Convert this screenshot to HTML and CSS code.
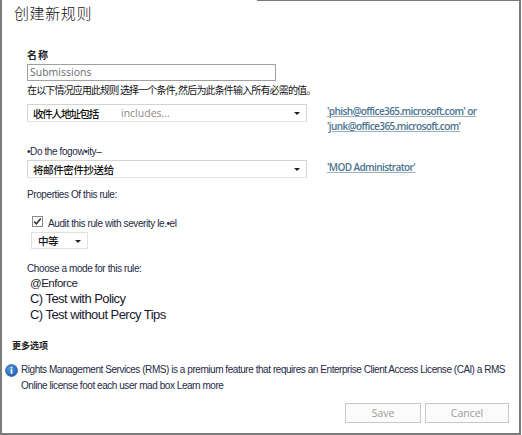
FILE: index.html
```html
<!DOCTYPE html>
<html lang="zh">
<head>
<meta charset="utf-8">
<title>创建新规则</title>
<link rel="stylesheet" href="styles.css">
</head>
<body>
<div class="frame">
  <h1 class="title">创建新规则</h1>
  <div class="form">
    <div class="label-cn">名称</div>
    <div class="textbox">Submissions</div>
    <div class="instr">在以下情况应用此规则 选择一个条件, 然后为此条件输入所有必需的值。</div>
    <div class="rule-row">
      <div class="select wide">
        <span class="sel-cn tight">收件人地址包括</span>
        <span class="sel-sub">includes...</span>
        <span class="arrow"></span>
      </div>
      <div class="links">
        <a class="link">'phish@office365.microsoft.com' or</a>
        <a class="link">'junk@office365.microsoft.com'</a>
      </div>
    </div>
    <div class="small-label do">•Do the fogow•ity–</div>
    <div class="rule-row">
      <div class="select wide">
        <span class="sel-cn">将邮件密件抄送给</span>
        <span class="arrow"></span>
      </div>
      <div class="links">
        <a class="link">'MOD Administrator'</a>
      </div>
    </div>
    <div class="small-label props">Properties Of this rule:</div>
    <div class="check-row">
      <span class="checkbox">
        <svg width="11" height="11" viewBox="0 0 11 11"><rect x="0.5" y="0.5" width="10" height="10" fill="#fff" stroke="#8a8a8a"/><path d="M2.2 5.6 L4.4 7.8 L8.8 2.6" fill="none" stroke="#333" stroke-width="1.5"/></svg>
      </span>
      <span class="check-text">Audit this rule with severity le.•el</span>
    </div>
    <div class="select small">
      <span class="sel-cn">中等</span>
      <span class="arrow"></span>
    </div>
    <div class="small-label mode">Choose a mode for this rule:</div>
    <div class="opt o1">@Enforce</div>
    <div class="opt o2">C) Test with Policy</div>
    <div class="opt o3">C) Test without Percy Tips</div>
  </div>
  <div class="more">更多选项</div>
  <div class="info">
    <span class="info-icon">
      <svg width="13" height="13" viewBox="0 0 13 13"><defs><radialGradient id="g" cx="40%" cy="35%" r="70%"><stop offset="0" stop-color="#5b9be0"/><stop offset="1" stop-color="#1d5fb0"/></radialGradient></defs><circle cx="6.5" cy="6.5" r="6" fill="url(#g)" stroke="#1a5299" stroke-width="0.6"/><rect x="5.7" y="5.2" width="1.7" height="4.6" fill="#fff"/><circle cx="6.55" cy="3.6" r="0.95" fill="#fff"/></svg>
    </span>
    <p class="info-text">Rights Management Services (RMS) is a premium feature that requires an Enterprise Client Access License (CAl) a RMS Online license foot each user mad box Learn more</p>
  </div>
  <div class="buttons">
    <button class="btn save">Save</button>
    <button class="btn cancel">Cancel</button>
  </div>
</div>
</body>
</html>
```
FILE: styles.css
```css
* { box-sizing: border-box; }
html, body { margin: 0; padding: 0; background: #fff; }
body {
  font-family: "Liberation Sans", "Noto Sans CJK SC", sans-serif;
  color: #222;
  width: 522px;
  height: 435px;
  overflow: hidden;
}
.frame {
  position: relative;
  width: 521px;
  height: 435px;
  border-left: 2px solid #7c7c7c;
  border-right: 2px solid #7c7c7c;
  border-bottom: 2px solid #7c7c7c;
}
.frame::before {
  content: "";
  position: absolute;
  top: 0;
  left: 255px;
  right: 0;
  height: 1px;
  background: #7c7c7c;
}
.title {
  margin: 0;
  padding: 3px 0 0 12px;
  font-family: "Noto Sans CJK SC", sans-serif;
  font-weight: 300;
  font-size: 15px;
  line-height: 20px;
  letter-spacing: 0.6px;
  color: #111;
}
.form { padding-left: 25px; }
.label-cn {
  margin-top: 25px;
  font-family: "Noto Sans CJK SC", sans-serif;
  font-weight: 700;
  font-size: 10px;
  line-height: 14px;
  letter-spacing: 1px;
}
.textbox {
  margin-top: 2px;
  width: 249px;
  height: 17px;
  border: 1px solid #a0a0a0;
  font-family: "Open Sans", sans-serif;
  font-size: 10.5px;
  line-height: 15px;
  padding-left: 2px;
  color: #6a6a6a;
}
.instr {
  margin-top: 2px;
  font-family: "Noto Sans CJK SC", sans-serif;
  font-size: 10px;
  line-height: 14px;
  letter-spacing: -0.85px;
  color: #111;
  white-space: nowrap;
}
.rule-row {
  display: flex;
  align-items: flex-start;
  gap: 20px;
  margin-top: 7px;
}
.select {
  position: relative;
  display: flex;
  align-items: center;
  height: 18px;
  border: 1px solid #d4d4d4;
  border-bottom-color: #e6e6e6;
  background: #fff;
}
.select.wide { width: 280px; }
.sel-cn {
  font-family: "Noto Sans CJK SC", sans-serif;
  font-weight: 500;
  font-size: 10.5px;
  letter-spacing: -0.4px;
  color: #111;
  padding-left: 5px;
  width: 93px;
}
.sel-cn.tight { letter-spacing: -1.2px; }
.sel-sub {
  font-family: "Open Sans", sans-serif;
  font-size: 10.5px;
  color: #8a8a8a;
}
.arrow {
  position: absolute;
  right: 6px;
  top: 7px;
  width: 0;
  height: 0;
  border-left: 3px solid transparent;
  border-right: 3px solid transparent;
  border-top: 3px solid #222;
}
.links { display: flex; flex-direction: column; }
.link {
  font-family: "Open Sans", sans-serif;
  font-weight: 600;
  font-size: 10px;
  line-height: 15px;
  letter-spacing: -0.6px;
  color: #4a7390;
  text-decoration: underline;
  text-decoration-color: #9ab0c0;
}
.small-label {
  font-family: "Liberation Sans", sans-serif;
  font-size: 10px;
  letter-spacing: -0.4px;
  line-height: 14px;
  color: #1e2a44;
}
.do { margin-top: 11px; }
.do + .rule-row { margin-top: 1px; }
.props { margin-top: 10px; }
.check-row {
  display: flex;
  align-items: flex-end;
  margin-top: 12px;
  padding-left: 5px;
  height: 13px;
}
.checkbox { display: block; width: 11px; height: 11px; line-height: 0; }
.check-text {
  font-family: "Liberation Sans", sans-serif;
  font-size: 10px;
  letter-spacing: -0.4px;
  line-height: 12px;
  color: #1e2a44;
  margin-left: 5px;
  position: relative;
  top: 3px;
}
.select.small {
  width: 57px;
  height: 17px;
  margin-top: 5px;
  margin-left: 4px;
  border-color: #e0e0e0;
}
.select.small .sel-cn { width: auto; padding-left: 6px; }
.mode { margin-top: 13px; }
.opt {
  font-family: "Liberation Sans", sans-serif;
  color: #1a1a2e;
  padding-left: 3px;
}
.o1 { font-size: 11.5px; letter-spacing: -0.5px; line-height: 15px; }
.o2, .o3 { font-size: 13px; letter-spacing: -0.55px; line-height: 16px; }
.more {
  margin-top: 17px;
  padding-left: 10px;
  font-family: "Noto Sans CJK SC", sans-serif;
  font-weight: 700;
  font-size: 9px;
  line-height: 12px;
}
.info {
  display: flex;
  align-items: flex-start;
  margin-top: 10px;
  padding-left: 3px;
}
.info-icon { line-height: 0; margin-top: 2px; width: 13px; flex: none; }
.info-text {
  margin: 0 0 0 3px;
  width: 495px;
  font-family: "Liberation Sans", sans-serif;
  font-size: 10px;
  letter-spacing: -0.45px;
  line-height: 16px;
  color: #1e2a44;
}
.buttons {
  display: flex;
  justify-content: flex-end;
  gap: 4px;
  margin-top: 9px;
  padding-right: 10px;
}
.btn {
  height: 20px;
  border: 1px solid #c8c8c8;
  background: #fbfbfb;
  font-family: "Open Sans", sans-serif;
  font-size: 10.5px;
  color: #9a9a9a;
  padding: 0;
}
.save { width: 76px; }
.cancel { width: 84px; }
```
